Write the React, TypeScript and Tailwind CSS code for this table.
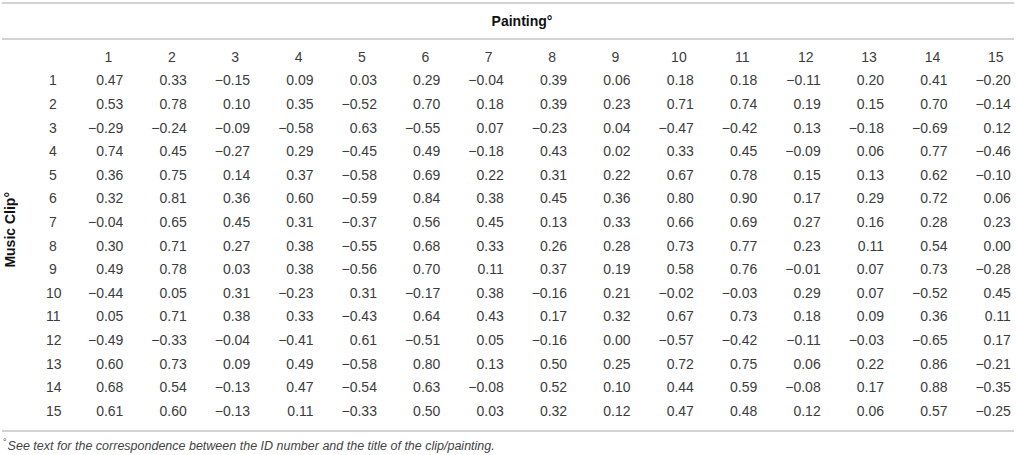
const rows: string[] = [
  "0.47 0.33 -0.15 0.09 0.03 0.29 -0.04 0.39 0.06 0.18 0.18 -0.11 0.20 0.41 -0.20",
  "0.53 0.78 0.10 0.35 -0.52 0.70 0.18 0.39 0.23 0.71 0.74 0.19 0.15 0.70 -0.14",
  "-0.29 -0.24 -0.09 -0.58 0.63 -0.55 0.07 -0.23 0.04 -0.47 -0.42 0.13 -0.18 -0.69 0.12",
  "0.74 0.45 -0.27 0.29 -0.45 0.49 -0.18 0.43 0.02 0.33 0.45 -0.09 0.06 0.77 -0.46",
  "0.36 0.75 0.14 0.37 -0.58 0.69 0.22 0.31 0.22 0.67 0.78 0.15 0.13 0.62 -0.10",
  "0.32 0.81 0.36 0.60 -0.59 0.84 0.38 0.45 0.36 0.80 0.90 0.17 0.29 0.72 0.06",
  "-0.04 0.65 0.45 0.31 -0.37 0.56 0.45 0.13 0.33 0.66 0.69 0.27 0.16 0.28 0.23",
  "0.30 0.71 0.27 0.38 -0.55 0.68 0.33 0.26 0.28 0.73 0.77 0.23 0.11 0.54 0.00",
  "0.49 0.78 0.03 0.38 -0.56 0.70 0.11 0.37 0.19 0.58 0.76 -0.01 0.07 0.73 -0.28",
  "-0.44 0.05 0.31 -0.23 0.31 -0.17 0.38 -0.16 0.21 -0.02 -0.03 0.29 0.07 -0.52 0.45",
  "0.05 0.71 0.38 0.33 -0.43 0.64 0.43 0.17 0.32 0.67 0.73 0.18 0.09 0.36 0.11",
  "-0.49 -0.33 -0.04 -0.41 0.61 -0.51 0.05 -0.16 0.00 -0.57 -0.42 -0.11 -0.03 -0.65 0.17",
  "0.60 0.73 0.09 0.49 -0.58 0.80 0.13 0.50 0.25 0.72 0.75 0.06 0.22 0.86 -0.21",
  "0.68 0.54 -0.13 0.47 -0.54 0.63 -0.08 0.52 0.10 0.44 0.59 -0.08 0.17 0.88 -0.35",
  "0.61 0.60 -0.13 0.11 -0.33 0.50 0.03 0.32 0.12 0.47 0.48 0.12 0.06 0.57 -0.25",
];

const cols = Array.from({ length: 15 }, (_, i) => i + 1);

export default function App() {
  return (
    <main className="w-[1016px] h-[455px] bg-white text-[#3c3c3c] font-['Liberation_Sans',Arial,sans-serif] pt-[2px] overflow-hidden">
      <div className="mx-[2px] h-[2px] bg-[#d2d2d2]" />

      {/* Table title */}
      <div className="h-[34px] flex items-center justify-center pl-[28px]">
        <span className="text-[14px] font-bold text-[#111]">Painting°</span>
      </div>

      <div className="mx-[2px] h-[2px] bg-[#d2d2d2]" />

      <div className="flex pt-[5px] pb-[7px]">
        {/* Side label */}
        <div className="w-[20px] flex items-center justify-center pb-[8px]">
          <span className="[writing-mode:vertical-rl] rotate-180 text-[14px] font-bold text-[#111] leading-none whitespace-nowrap">
            Music Clip°
          </span>
        </div>

        <div className="grid grid-cols-[40px_repeat(15,63.4px)] auto-rows-[23.6px] items-center text-[14px] leading-none">
          <div />
          {cols.map((c) => (
            <div key={"h" + c} className="text-right">
              <span className="inline-block w-[30px] text-center">{c}</span>
            </div>
          ))}

          {rows.map((row, r) => (
            <div key={r} className="contents">
              <div className="text-right">
                <span className="inline-block w-[14px] text-center">{r + 1}</span>
              </div>
              {row.split(" ").map((v, i) => (
                <div key={i} className="text-right">
                  {v.replace("-", "\u2212")}
                </div>
              ))}
            </div>
          ))}
        </div>
      </div>

      <div className="mx-[2px] h-[2px] bg-[#d2d2d2]" />

      <p className="pl-[3px] pt-[6px] text-[12.5px] leading-[16px] italic text-[#444]">
        <sup className="text-[9px] not-italic mr-[1px]">°</sup>
        See text for the correspondence between the ID number and the title of the clip/painting.
      </p>
    </main>
  );
}
